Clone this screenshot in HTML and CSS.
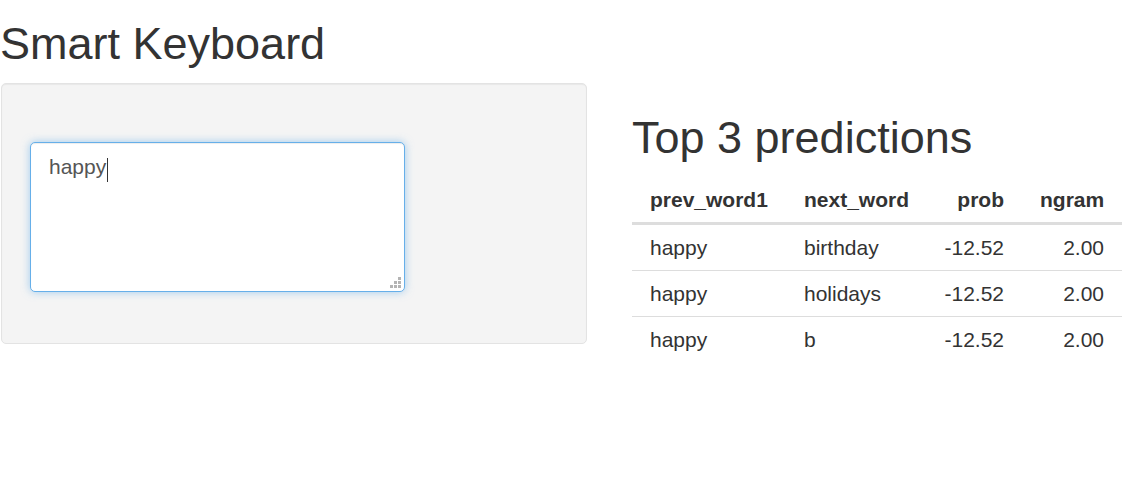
FILE: index.html
```html
<!DOCTYPE html>
<html lang="en">
<head>
<meta charset="utf-8">
<title>Smart Keyboard</title>
<link rel="stylesheet" href="styles.css">
</head>
<body>
<h1 class="title">Smart Keyboard</h1>
<div class="main">
  <div class="well">
    <div class="field">
      <textarea id="words" class="input" spellcheck="false">happy</textarea>
      <span class="caret" aria-hidden="true"></span>
      <svg class="grip" width="12" height="12" viewBox="0 0 12 12" aria-hidden="true">
        <rect x="8" y="0" width="3" height="3" fill="#b4b4b4"/>
        <rect x="4" y="4" width="3" height="3" fill="#b4b4b4"/>
        <rect x="8" y="4" width="3" height="3" fill="#b4b4b4"/>
        <rect x="0" y="8" width="3" height="3" fill="#b4b4b4"/>
        <rect x="4" y="8" width="3" height="3" fill="#b4b4b4"/>
        <rect x="8" y="8" width="3" height="3" fill="#b4b4b4"/>
      </svg>
    </div>
  </div>
  <div class="side">
    <h3 class="subtitle">Top 3 predictions</h3>
    <table class="preds">
      <colgroup>
        <col class="c1"><col class="c2"><col class="c3"><col class="c4">
      </colgroup>
      <thead>
        <tr><th>prev_word1</th><th>next_word</th><th class="num">prob</th><th class="num">ngram</th></tr>
      </thead>
      <tbody>
        <tr><td>happy</td><td>birthday</td><td class="num">-12.52</td><td class="num">2.00</td></tr>
        <tr><td>happy</td><td>holidays</td><td class="num">-12.52</td><td class="num">2.00</td></tr>
        <tr><td>happy</td><td>b</td><td class="num">-12.52</td><td class="num">2.00</td></tr>
      </tbody>
    </table>
  </div>
</div>
</body>
</html>
```
FILE: styles.css
```css
* { box-sizing: border-box; }
body {
  margin: 0;
  font-family: "Liberation Sans", Arial, sans-serif;
  font-size: 21px;
  line-height: 30px;
  color: #333;
  background: #fff;
}
.title {
  margin: 19px 0 14px 0;
  font-size: 45px;
  font-weight: 400;
  line-height: 1.1;
}
.main {
  display: flex;
  align-items: flex-start;
  gap: 45px;
}
.well {
  margin-left: 1px;
  width: 586px;
  height: 261px;
  padding: 58px 28px 51px;
  background: #f4f4f4;
  border: 1px solid #e3e3e3;
  border-radius: 5px;
  box-shadow: inset 0 1px 1px rgba(0,0,0,.05);
}
.field {
  position: relative;
  width: 375px;
  height: 150px;
}
.input {
  display: block;
  width: 375px;
  height: 150px;
  margin: 0;
  padding: 9px 18px;
  font-family: "Liberation Sans", Arial, sans-serif;
  font-size: 21px;
  line-height: 30px;
  color: #555;
  background: #fff;
  border: 1px solid #66afe9;
  border-radius: 5px;
  outline: 0;
  resize: none;
  box-shadow: inset 0 1px 1px rgba(0,0,0,.075), 0 0 8px rgba(102,175,233,.6);
}
.caret {
  position: absolute;
  left: 77px;
  top: 16px;
  width: 1px;
  height: 24px;
  background: #333;
}
.grip {
  position: absolute;
  right: 3px;
  bottom: 3px;
}
.side {
  width: 490px;
}
.subtitle {
  margin: 30px 0 15px 0;
  font-size: 45px;
  font-weight: 400;
  line-height: 1.1;
}
.preds {
  width: 490px;
  table-layout: fixed;
  border-collapse: collapse;
  border-spacing: 0;
}
.c1 { width: 154px; }
.c2 { width: 135px; }
.c3 { width: 101px; }
.c4 { width: 100px; }
.preds th, .preds td {
  padding: 7.5px 18px;
  text-align: left;
  line-height: 30px;
}
.preds th {
  font-weight: 700;
  border-bottom: 3px solid #ddd;
}
.preds td {
  border-top: 1px solid #ddd;
}
.preds tbody tr:first-child td {
  border-top: 0;
}
.preds .num {
  text-align: right;
}
```
